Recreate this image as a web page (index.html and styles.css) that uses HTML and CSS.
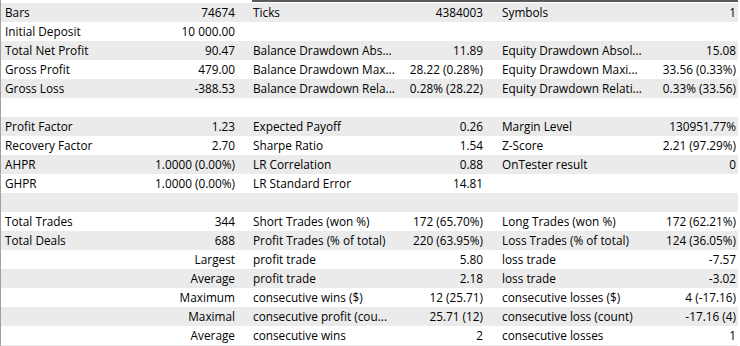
FILE: index.html
```html
<!DOCTYPE html>
<html>
<head>
<meta charset="utf-8">
<link rel="stylesheet" href="styles.css">
</head>
<body>
<div class="report">
  <div class="topstrip"><div class="topleft"></div><div class="topline"></div></div>
  <div class="row"><span class="l1">Bars</span><span class="v">74674</span><span class="l2">Ticks</span><span class="v">4384003</span><span class="l3">Symbols</span><span class="v">1</span></div>
  <div class="row"><span class="l1">Initial Deposit</span><span class="v">10 000.00</span><span class="l2"></span><span class="v"></span><span class="l3"></span><span class="v"></span></div>
  <div class="row"><span class="l1">Total Net Profit</span><span class="v">90.47</span><span class="l2">Balance Drawdown Abs...</span><span class="v">11.89</span><span class="l3">Equity Drawdown Absol...</span><span class="v">15.08</span></div>
  <div class="row"><span class="l1">Gross Profit</span><span class="v">479.00</span><span class="l2">Balance Drawdown Max...</span><span class="v">28.22 (0.28%)</span><span class="l3">Equity Drawdown Maxi...</span><span class="v">33.56 (0.33%)</span></div>
  <div class="row"><span class="l1">Gross Loss</span><span class="v">-388.53</span><span class="l2">Balance Drawdown Rela...</span><span class="v">0.28% (28.22)</span><span class="l3">Equity Drawdown Relati...</span><span class="v">0.33% (33.56)</span></div>
  <div class="row"></div>
  <div class="row"><span class="l1">Profit Factor</span><span class="v">1.23</span><span class="l2">Expected Payoff</span><span class="v">0.26</span><span class="l3">Margin Level</span><span class="v">130951.77%</span></div>
  <div class="row"><span class="l1">Recovery Factor</span><span class="v">2.70</span><span class="l2">Sharpe Ratio</span><span class="v">1.54</span><span class="l3">Z-Score</span><span class="v">2.21 (97.29%)</span></div>
  <div class="row"><span class="l1">AHPR</span><span class="v">1.0000 (0.00%)</span><span class="l2">LR Correlation</span><span class="v">0.88</span><span class="l3">OnTester result</span><span class="v">0</span></div>
  <div class="row"><span class="l1">GHPR</span><span class="v">1.0000 (0.00%)</span><span class="l2">LR Standard Error</span><span class="v">14.81</span><span class="l3"></span><span class="v"></span></div>
  <div class="row"></div>
  <div class="row"><span class="l1">Total Trades</span><span class="v">344</span><span class="l2">Short Trades (won %)</span><span class="v">172 (65.70%)</span><span class="l3">Long Trades (won %)</span><span class="v">172 (62.21%)</span></div>
  <div class="row"><span class="l1">Total Deals</span><span class="v">688</span><span class="l2">Profit Trades (% of total)</span><span class="v">220 (63.95%)</span><span class="l3">Loss Trades (% of total)</span><span class="v">124 (36.05%)</span></div>
  <div class="row"><span class="l1"></span><span class="v">Largest</span><span class="l2">profit trade</span><span class="v">5.80</span><span class="l3">loss trade</span><span class="v">-7.57</span></div>
  <div class="row"><span class="l1"></span><span class="v">Average</span><span class="l2">profit trade</span><span class="v">2.18</span><span class="l3">loss trade</span><span class="v">-3.02</span></div>
  <div class="row"><span class="l1"></span><span class="v">Maximum</span><span class="l2">consecutive wins ($)</span><span class="v">12 (25.71)</span><span class="l3">consecutive losses ($)</span><span class="v">4 (-17.16)</span></div>
  <div class="row"><span class="l1"></span><span class="v">Maximal</span><span class="l2">consecutive profit (cou...</span><span class="v">25.71 (12)</span><span class="l3">consecutive loss (count)</span><span class="v">-17.16 (4)</span></div>
  <div class="row"><span class="l1"></span><span class="v">Average</span><span class="l2">consecutive wins</span><span class="v">2</span><span class="l3">consecutive losses</span><span class="v">1</span></div>
  <div class="row"></div>
</div>
</body>
</html>
```
FILE: styles.css
```css
html, body {
  margin: 0;
  padding: 0;
  background: #ffffff;
  overflow: hidden;
}
.report {
  width: 740px;
  height: 346px;
  overflow: hidden;
  border-left: 1px solid #a0a0a0;
  box-sizing: border-box;
  font-family: "Open Sans", "Noto Sans", sans-serif;
  font-size: 11.8px;
  color: #000000;
}
.topstrip {
  display: flex;
  height: 3px;
}
.topleft {
  width: 251px;
}
.topline {
  width: 486px;
  height: 2px;
  background: #5a5a5a;
}
.row {
  display: grid;
  grid-template-columns: 115px 115px 155px 93px 157px 96px;
  height: 19px;
  line-height: 19px;
  width: 737px;
  padding-left: 4px;
  box-sizing: border-box;
  white-space: nowrap;
}
.row:nth-child(even) {
  background: #ebebeb;
}
.v {
  text-align: right;
}
.l2 {
  padding-left: 18px;
}
.l3 {
  padding-left: 19px;
}
```
